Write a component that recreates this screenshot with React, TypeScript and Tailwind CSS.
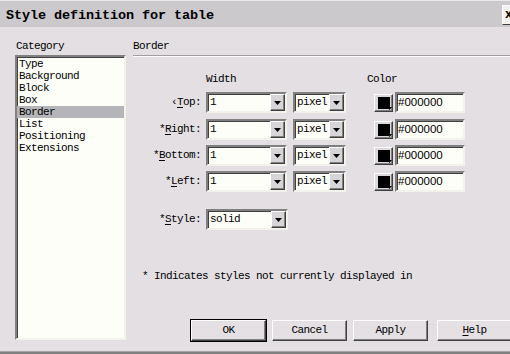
import React from "react"

const mono = "font-['Liberation_Mono',monospace] text-[11px] tracking-[-0.6px]"

function Arrow() {
  return (
    <svg width="7" height="4" viewBox="0 0 7 4">
      <polygon points="0,0 7,0 3.5,4" fill="#000" />
    </svg>
  )
}

function DropBtn() {
  return (
    <div className="flex h-[17px] w-[15px] shrink-0 items-center justify-center border border-t-white border-l-white border-r-[#404040] border-b-[#404040] bg-[#d8d5d8] shadow-[inset_-1px_-1px_0_#808080]">
      <Arrow />
    </div>
  )
}

function Select({ value, w }: { value: string; w: string }) {
  return (
    <div className={`flex h-[21px] ${w} shrink-0 items-center border-2 border-t-[#808080] border-l-[#808080] border-r-[#f4f2ec] border-b-[#f4f2ec] bg-[#fefef8] shadow-[inset_1px_1px_0_#404040]`}>
      <span className="flex-1 pl-[2px] leading-[17px]">{value}</span>
      <DropBtn />
    </div>
  )
}

function Swatch() {
  return (
    <div className="relative h-[18px] w-[19px] shrink-0 border border-t-white border-l-white border-r-[#404040] border-b-[#404040] bg-[#dcd8dc] shadow-[inset_-1px_-1px_0_#808080]">
      <div className="absolute left-[3px] top-[2px] h-[12px] w-[12px] bg-black" />
      <svg className="absolute left-[12px] top-[12px]" width="5" height="3" viewBox="0 0 5 3">
        <polygon points="0,0 5,0 2.5,3" fill="#000" />
      </svg>
    </div>
  )
}

function HexInput() {
  return (
    <div className="flex h-[21px] w-[70px] shrink-0 items-center border-2 border-t-[#808080] border-l-[#808080] border-r-[#f4f2ec] border-b-[#f4f2ec] bg-[#fefef8] shadow-[inset_1px_1px_0_#404040] pl-[1px] font-['Liberation_Sans',sans-serif] text-[11.5px] tracking-normal">
      #000000
    </div>
  )
}

function Row({ star, under, rest, mt }: { star: string; under: string; rest: string; mt: string }) {
  return (
    <div className={`flex items-center ${mt}`}>
      <span className="w-[68px] text-right">
        {star}
        <span className="underline underline-offset-2">{under}</span>
        {rest}
      </span>
      <div className="ml-[5px]">
        <Select value="1" w="w-[81px]" />
      </div>
      <div className="ml-[6px]">
        <Select value="pixel" w="w-[53px]" />
      </div>
      <div className="ml-[28px]">
        <Swatch />
      </div>
      <div className="ml-[2px]">
        <HexInput />
      </div>
    </div>
  )
}

function Button({ label, def, u }: { label: string; def?: boolean; u?: boolean }) {
  return (
    <div className={`flex h-[21px] w-[75px] shrink-0 items-center justify-center bg-[#e4e0e4] border border-t-white border-l-white border-r-[#404040] border-b-[#404040] shadow-[inset_-1px_-1px_0_#808080] ${def ? "outline outline-1 outline-black" : ""}`}>
      {u ? (
        <span>
          <span className="underline underline-offset-2">{label[0]}</span>
          {label.slice(1)}
        </span>
      ) : (
        label
      )}
    </div>
  )
}

const categories = ["Type", "Background", "Block", "Box", "Border", "List", "Positioning", "Extensions"]

export default function App() {
  return (
    <div className={`flex h-[354px] w-[510px] flex-col overflow-hidden bg-[#e3dfe3] text-black ${mono}`}>
      <div className="flex h-[27px] shrink-0 items-start border-t border-t-[#ebe9eb] bg-[#cbc9cb]">
        <span className="ml-[6px] mt-[7px] font-['Liberation_Mono',monospace] text-[13.5px] font-bold leading-[15px] tracking-[-0.1px]">
          Style definition for table
        </span>
        <div className="ml-auto mr-[-10px] mt-[4px] flex h-[20px] w-[18px] items-center pl-[2px] border border-t-white border-l-white border-r-[#404040] border-b-[#404040] bg-[#f2f0ee] font-bold text-[12px] tracking-normal">
          x
        </div>
      </div>

      <div className="flex flex-1 pl-[15px] pt-[13px]">
        <div className="flex w-[111px] shrink-0 flex-col">
          <div className="h-[12px] pl-[1px] leading-[12px]">Category</div>
          <div className="mt-[3px] h-[285px] border-2 border-t-[#808080] border-l-[#808080] border-r-[#f4f2ec] border-b-[#f4f2ec] bg-[#fdfef8] pt-[1px] shadow-[inset_1px_1px_0_#404040]">
            {categories.map((c) => (
              <div key={c} className={`h-[12px] pl-[2px] leading-[12px] ${c === "Border" ? "bg-[#b5b5b9]" : ""}`}>
                {c}
              </div>
            ))}
          </div>
        </div>

        <div className="ml-[7px] flex flex-1 flex-col">
          <div className="h-[12px] leading-[12px]">Border</div>
          <div className="mt-[3px] h-[2px] border-t border-t-[#a09ca0] border-b border-b-white" />
          <div className="mt-[16px] flex h-[12px] leading-[12px]">
            <span className="ml-[73px]">Width</span>
            <span className="ml-[131px]">Color</span>
          </div>
          <Row star="‹" under="T" rest="op:" mt="mt-[7px]" />
          <Row star="*" under="R" rest="ight:" mt="mt-[6px]" />
          <Row star="*" under="B" rest="ottom:" mt="mt-[5px]" />
          <Row star="*" under="L" rest="eft:" mt="mt-[5px]" />
          <div className="mt-[17px] flex items-center">
            <span className="w-[68px] text-right">
              *<span className="underline underline-offset-2">S</span>tyle:
            </span>
            <div className="ml-[5px]">
              <Select value="solid" w="w-[82px]" />
            </div>
          </div>
          <div className="ml-[9px] mt-[40px] h-[12px] leading-[12px]">
            * Indicates styles not currently displayed in
          </div>
          <div className="ml-[58px] mt-[38px] flex">
            <Button label="OK" def />
            <div className="ml-[6px]">
              <Button label="Cancel" />
            </div>
            <div className="ml-[6px]">
              <Button label="Apply" />
            </div>
            <div className="ml-[9px]">
              <Button label="Help" u />
            </div>
          </div>
        </div>
      </div>

      <div className="h-[3px] shrink-0 border-t border-t-[#a8a4a8] bg-[#808080]" />
    </div>
  )
}
